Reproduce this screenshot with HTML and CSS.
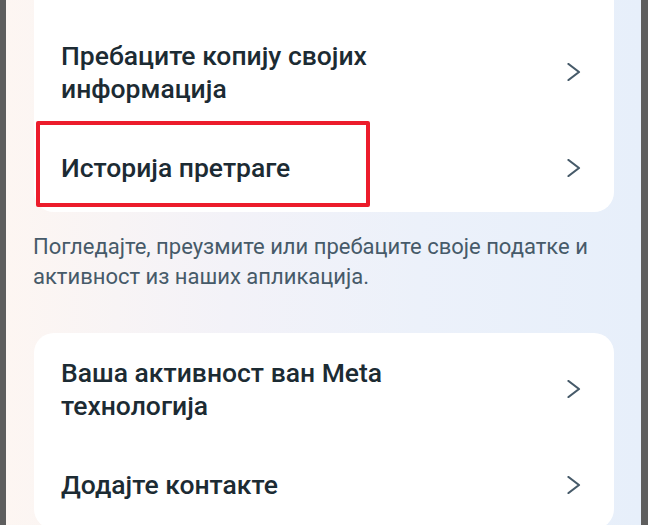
FILE: index.html
```html
<html>
    <head>
        <meta charset="utf-8">
        <meta name="viewport" content="width=device-width, initial-scale=1.0">
        <title>Ваше информације</title>
        <link rel="stylesheet" href="styles.css">
    </head>
    <body>
        <div class="frame">
            <div class="screen">
                <div class="card card-top">
                    <div class="row">
                        <span class="label">Пребаците копију својих информација</span>
                        <svg class="chevron" width="14" height="18" viewBox="0 0 14 18"><path d="M1.5 1 L12 9 L1.5 17" /></svg>
                    </div>
                    <div class="row">
                        <span class="label">Историја претраге</span>
                        <svg class="chevron" width="14" height="18" viewBox="0 0 14 18"><path d="M1.5 1 L12 9 L1.5 17" /></svg>
                        <div class="highlight"></div>
                    </div>
                </div>

                <p class="note">Погледајте, преузмите или пребаците своје податке и активност из наших апликација.</p>

                <div class="card">
                    <div class="row">
                        <span class="label">Ваша активност ван Meta технологија</span>
                        <svg class="chevron" width="14" height="18" viewBox="0 0 14 18"><path d="M1.5 1 L12 9 L1.5 17" /></svg>
                    </div>
                    <div class="row">
                        <span class="label">Додајте контакте</span>
                        <svg class="chevron" width="14" height="18" viewBox="0 0 14 18"><path d="M1.5 1 L12 9 L1.5 17" /></svg>
                    </div>
                </div>
            </div>
        </div>
    </body>
</html>
```

FILE: styles.css
```css
body {
    margin: 0;
    height: 525px;
    overflow: hidden;
    background-color: #5e5e5e;
    font-family: Roboto, "Noto Sans", sans-serif;
}

.frame {
    height: 525px;
    padding: 0 7px 0 6px;
}

.screen {
    height: 525px;
    overflow: hidden;
    padding: 0 27px 0 28px;
    background: linear-gradient(90deg, #fdf6f2 0%, #f3f2f8 35%, #ecf1fa 65%, #e7effa 100%);
}

.card {
    background-color: white;
    border-radius: 20px;
    padding: 0 0 5px 0;
}

.card-top {
    margin-top: -30px;
    padding-top: 46px;
}

.row {
    position: relative;
    display: flex;
    align-items: center;
    justify-content: space-between;
    padding: 23px 33px 23px 27px;
}

.label {
    max-width: 430px;
    font-size: 26.5px;
    line-height: 33px;
    font-weight: 500;
    color: #1c2b33;
}

.chevron {
    flex-shrink: 0;
}

.chevron path {
    fill: none;
    stroke: #465a69;
    stroke-width: 2.2;
    stroke-linecap: round;
    stroke-linejoin: round;
}

.highlight {
    position: absolute;
    left: 2px;
    top: -7px;
    width: 326px;
    height: 78px;
    border: 4px solid #ec1c2b;
    border-radius: 2px;
}

.note {
    margin: 20px 0 41px -1px;
    font-size: 22px;
    line-height: 30px;
    color: #465a69;
}
```
